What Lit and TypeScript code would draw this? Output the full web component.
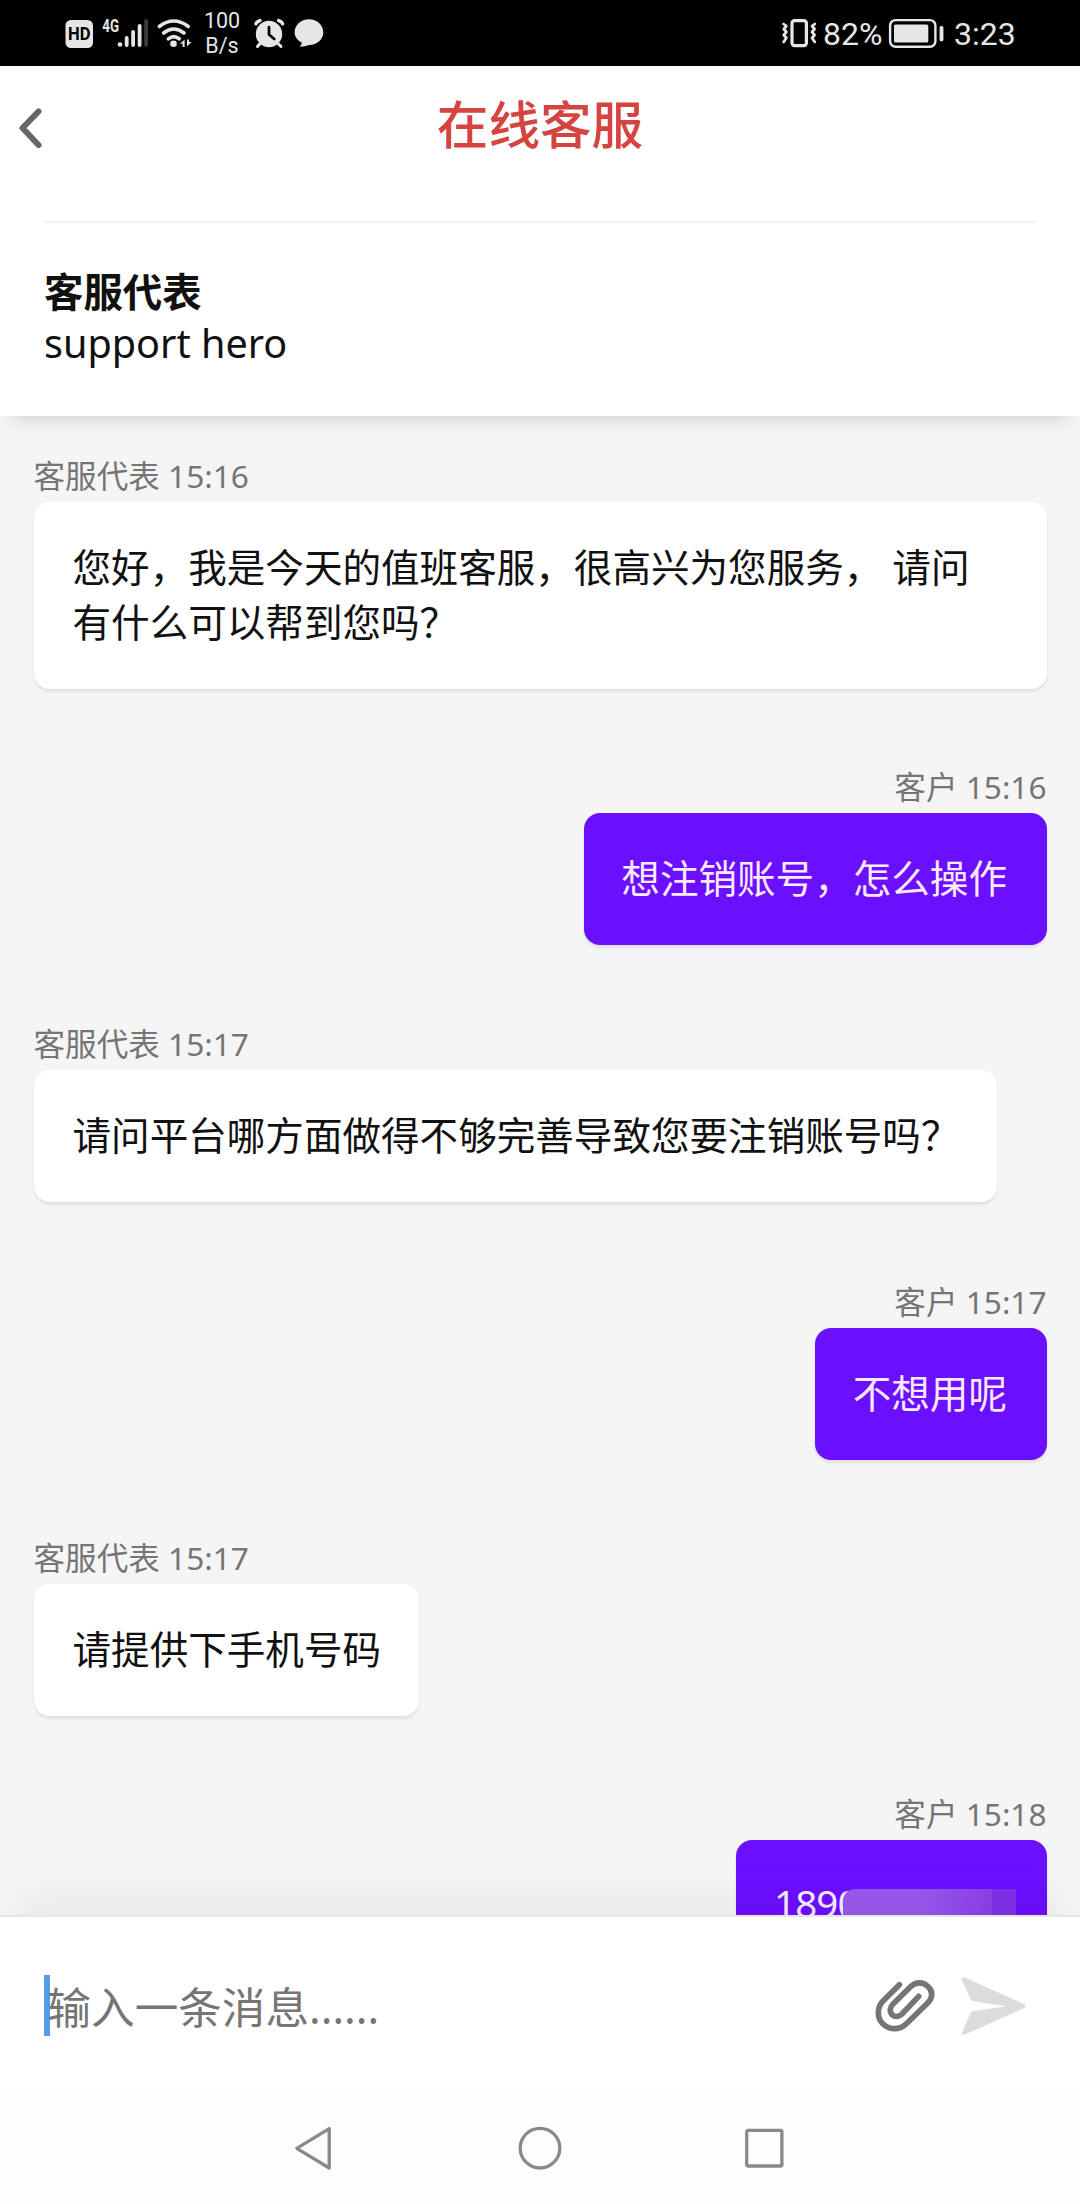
import { LitElement, html, css, svg } from "lit";
import { customElement, property } from "lit/decorators.js";
import { classMap } from "lit/directives/class-map.js";

interface Message {
  mine: boolean;
  who: string;
  time: string;
  text: string;
  masked?: boolean;
}

const MESSAGES: Message[] = [
  { mine: false, who: "客服代表", time: "15:16", text: "您好，我是今天的值班客服，很高兴为您服务， 请问\n有什么可以帮到您吗？" },
  { mine: true, who: "客户", time: "15:16", text: "想注销账号，怎么操作" },
  { mine: false, who: "客服代表", time: "15:17", text: "请问平台哪方面做得不够完善导致您要注销账号吗？" },
  { mine: true, who: "客户", time: "15:17", text: "不想用呢" },
  { mine: false, who: "客服代表", time: "15:17", text: "请提供下手机号码" },
  { mine: true, who: "客户", time: "15:18", text: "1890", masked: true },
];

@customElement("status-bar")
class StatusBar extends LitElement {
  static styles = css`
    :host {
      display: flex;
      justify-content: space-between;
      height: 66px;
      background: #000;
      color: #e6e6e6;
      font-family: Roboto, "Noto Sans", sans-serif;
    }
    svg { display: block; flex: none; }
    .left { display: flex; padding-left: 60px; }
    .right { display: flex; padding-right: 65px; }
    .rate {
      width: 54px;
      padding-top: 9px;
      text-align: center;
      font-size: 21.5px;
      line-height: 24.5px;
    }
    .num { font-size: 32px; line-height: 69px; white-space: nowrap; }
    .pct { width: 62px; }
    .clock { width: 61px; }
    .hd { font: 700 18px Roboto, sans-serif; fill: #000; }
    .net { font: 700 18px Roboto, sans-serif; fill: #e6e6e6; }
  `;
  render() {
    return html`
      <div class="left">
        <svg width="135" height="66" viewBox="60 0 135 66" fill="#e6e6e6">
          <rect x="65.5" y="20" width="27.5" height="28" rx="5.5" />
          <text class="hd" x="68" y="40.4" textLength="22.5" lengthAdjust="spacingAndGlyphs">HD</text>
          <text class="net" x="102.3" y="31.8" textLength="16.7" lengthAdjust="spacingAndGlyphs">4G</text>
          <circle cx="120" cy="44.5" r="2.3" />
          <rect x="124.8" y="36" width="3.8" height="11" rx="1.9" />
          <rect x="131.2" y="30" width="3.8" height="17" rx="1.9" />
          <rect x="137.7" y="24" width="3.8" height="23" rx="1.9" />
          <rect x="144.2" y="19" width="3.8" height="28" rx="1.9" fill="#3c3c3c" />
          <g fill="none" stroke="#e6e6e6" stroke-width="3.6" stroke-linecap="round">
            <path d="M159.3 26.5 Q173.7 15.5 188.3 26.5" />
            <path d="M163.6 33 Q173.7 25 184 33" />
            <path d="M168.3 38.8 Q173.7 34.6 179.2 38.8" />
          </g>
          <circle cx="173.5" cy="43.8" r="3.3" />
          <path d="M180 43.8 L184.6 39.4 V47 H182.6 V43.8 Z M187 39.4 V46.6 L191.5 42 H189 V39.4 Z" />
        </svg>
        <div class="rate">100<br />B/s</div>
        <svg width="80" height="66" viewBox="249 0 80 66" fill="#e6e6e6">
          <circle cx="269" cy="34" r="13.2" />
          <path d="M260.5 43 L257.5 46.5 M277.5 43 L281 46.5" stroke="#e6e6e6" stroke-width="3" stroke-linecap="round" />
          <path d="M256 23.8 Q256.6 21.8 260 20.6 M282.6 23.8 Q282 21.8 278.6 20.6" fill="none" stroke="#e6e6e6" stroke-width="3.4" stroke-linecap="round" />
          <path d="M269 27 V34.5 L274.3 39" fill="none" stroke="#000" stroke-width="2.7" stroke-linecap="round" stroke-linejoin="round" />
          <path d="M309 19.3 C317 19.3 323.3 25 323.3 32.3 C323.3 39.6 317 45 309.5 45 C307.5 45 306 46.8 299.6 46.4 C301.5 45 302 43.7 301.6 42.6 C297 40 294.6 36.4 294.6 32.3 C294.6 25 301 19.3 309 19.3 Z" />
        </svg>
      </div>
      <div class="right">
        <svg width="43" height="66" viewBox="780 0 43 66" fill="none" stroke="#e6e6e6">
          <rect x="792" y="20.6" width="14.4" height="25" rx="2.6" stroke-width="3.2" />
          <path d="M783.6 24 L786.4 26 L783.8 29 L786.4 32 L783.8 35 L786.4 38 L783.6 42" stroke-width="2.7" stroke-linejoin="round" stroke-linecap="round" />
          <path d="M814.8 24 L812 26 L814.6 29 L812 32 L814.6 35 L812 38 L814.8 42" stroke-width="2.7" stroke-linejoin="round" stroke-linecap="round" />
        </svg>
        <div class="num pct">82%</div>
        <svg width="69" height="66" viewBox="885 0 69 66">
          <rect x="890.1" y="20.1" width="45.3" height="26.6" rx="5.5" fill="none" stroke="#e6e6e6" stroke-width="2.4" />
          <rect x="894" y="24.6" width="34.3" height="18" rx="1.6" fill="#e6e6e6" />
          <rect x="939.6" y="26" width="3.8" height="15.3" rx="1.6" fill="#e6e6e6" />
        </svg>
        <div class="num clock">3:23</div>
      </div>
    `;
  }
}

@customElement("chat-header")
class ChatHeader extends LitElement {
  static styles = css`
    :host {
      display: block;
      position: relative;
      z-index: 1;
      height: 350px;
      background: #fff;
      box-shadow: 0 16px 18px -12px rgba(0, 0, 0, 0.14);
      color: #111;
    }
    .bar {
      display: grid;
      grid-template-columns: 60px 1fr 60px;
      height: 155px;
    }
    .back { display: block; margin-top: 39px; margin-left: 15px; }
    .title {
      text-align: center;
      font-size: 51.6px;
      line-height: 117px;
      font-weight: 500;
      color: #d54440;
    }
    .agent {
      margin: 0 44px;
      border-top: 2px solid #f1f1f1;
      padding-top: 44px;
      font-size: 39.4px;
      line-height: 50.5px;
    }
    .name { font-weight: 700; }
    .role { font-size: 39.6px; }
  `;
  render() {
    return html`
      <div class="bar">
        <svg class="back" width="30" height="46" viewBox="0 0 30 46" fill="none" stroke="#666" stroke-width="6" stroke-linecap="round" stroke-linejoin="round">
          <path d="M23.5 6.5 L7.5 23 L23.5 40" />
        </svg>
        <div class="title">在线客服</div>
      </div>
      <div class="agent">
        <div class="name">客服代表</div>
        <div class="role">support hero</div>
      </div>
    `;
  }
}

@customElement("chat-message")
class ChatMessage extends LitElement {
  @property({ attribute: false }) message!: Message;

  static styles = css`
    :host { display: block; }
    .row { display: flex; flex-direction: column; align-items: flex-start; }
    .row.mine { align-items: flex-end; }
    .label {
      padding-bottom: 2px;
      font-size: 31.6px;
      line-height: 49px;
      color: #757575;
      white-space: nowrap;
    }
    .bubble {
      position: relative;
      box-sizing: border-box;
      padding: 38px 38px 39px 39px;
      border-radius: 16px;
      background: #fff;
      color: #111;
      font-size: 38.57px;
      line-height: 55px;
      white-space: pre;
      box-shadow: 0 3px 3px rgba(0, 0, 0, 0.08);
    }
    .wide { width: 1013px; }
    .mine .bubble { padding: 38px 39.5px 39px 37.5px; background: #6b0fff; color: #fbeaff; }
    .mine .masked { width: 311px; padding-top: 36px; padding-left: 38.5px; letter-spacing: -0.9px; }
    .mask {
      position: absolute;
      left: 107px;
      top: 49px;
      width: 173px;
      height: 30px;
      border-radius: 12px 0 0 0;
      background: linear-gradient(90deg, #9a58ee 0 45%, #9450ec 60%, #8c40ea 86%, #8032e8 86%);
    }
  `;
  render() {
    const m = this.message;
    return html`
      <div class=${classMap({ row: true, mine: m.mine })}>
        <div class="label">${m.who} ${m.time}</div>
        <div class=${classMap({ bubble: true, wide: m.text.includes("\n"), masked: !!m.masked })}>${m.text}${m.masked ? html`<span class="mask"></span>` : null}</div>
      </div>
    `;
  }
}

@customElement("chat-composer")
class ChatComposer extends LitElement {
  static styles = css`
    :host {
      display: flex;
      position: relative;
      z-index: 1;
      box-sizing: border-box;
      height: 176px;
      padding: 0 52px 0 44px;
      border-top: 2px solid #e6e6e6;
      background: #fff;
      box-shadow: 0 -30px 40px -14px rgba(0, 0, 0, 0.05);
    }
    .caret { width: 5.5px; height: 61px; margin-top: 58px; background: #5699e6; }
    .hint {
      flex: 1;
      margin-left: -2px;
      font-size: 43.6px;
      line-height: 180px;
      color: #757575;
    }
    svg { display: block; }
    .attach { margin: 59px 18px 0 0; }
    .send { margin-top: 58px; }
  `;
  render() {
    return html`
      <div class="caret"></div>
      <div class="hint">输入一条消息......</div>
      <svg class="attach" width="66.7" height="60" viewBox="700 590 200 180" fill="none" stroke="#757575" stroke-width="17" stroke-linecap="round" stroke-linejoin="round">
        <path d="M779 616 L730 665 C712 683 711 715 729 733 C747 752 778 753 797 736 L864 671 C880 656 880 635 865 622 C851 607 829 607 814 621 L760 674 C750 684 749 698 757 706 C766 714 778 713 787 704 L837 651" />
      </svg>
      <svg class="send" width="70" height="62" viewBox="953 584 210 186" fill="#dcdcdc">
        <path d="M964 599 C962 592 968 588 975 592 L1151 671 C1157 674 1157 680 1151 683 L975 762 C968 765 962 762 965 755 L991 698 C993 694 996 693 1000 692 L1088 680 C1094 679 1094 677 1088 676 L1000 663 C996 662 993 660 991 656 Z" />
      </svg>
    `;
  }
}

@customElement("nav-bar")
class NavBar extends LitElement {
  static styles = css`
    :host {
      display: flex;
      justify-content: center;
      gap: 180px;
      position: relative;
      z-index: 2;
      height: 112.5px;
      padding-top: 0.5px;
      background: #fdfdfd;
    }
    svg { display: block; margin-top: 34px; }
  `;
  render() {
    const shapes = [
      svg`<path d="M2.8 22.3 L35.2 2.6 V42 Z" />`,
      svg`<circle cx="22" cy="22.2" r="19.8" />`,
      svg`<rect x="4.7" y="4.4" width="35.2" height="35.6" rx="1.5" />`,
    ];
    return shapes.map(
      (s) => html`<svg width="44" height="46" viewBox="0 0 44 46" fill="none" stroke="#898989" stroke-width="3.3" stroke-linejoin="round">${s}</svg>`
    );
  }
}

@customElement("app-root")
class AppRoot extends LitElement {
  static styles = css`
    :host {
      display: flex;
      flex-direction: column;
      width: 1080px;
      height: 2204px;
      overflow: hidden;
      background: #f5f5f5;
      font-family: "Noto Sans", "Noto Sans CJK SC", sans-serif;
    }
    .thread {
      flex: 1;
      min-height: 0;
      overflow: hidden;
      display: flex;
      flex-direction: column;
      gap: 73px;
      padding: 35px 33.5px 0;
    }
    .thread > * { flex: none; }
    .thread > :nth-child(3) { margin-top: 1px; }
    .thread > :nth-child(4) { margin-top: 2px; }
  `;
  render() {
    return html`
      <status-bar></status-bar>
      <chat-header></chat-header>
      <div class="thread">
        ${MESSAGES.map((m) => html`<chat-message .message=${m}></chat-message>`)}
      </div>
      <chat-composer></chat-composer>
      <nav-bar></nav-bar>
    `;
  }
}
